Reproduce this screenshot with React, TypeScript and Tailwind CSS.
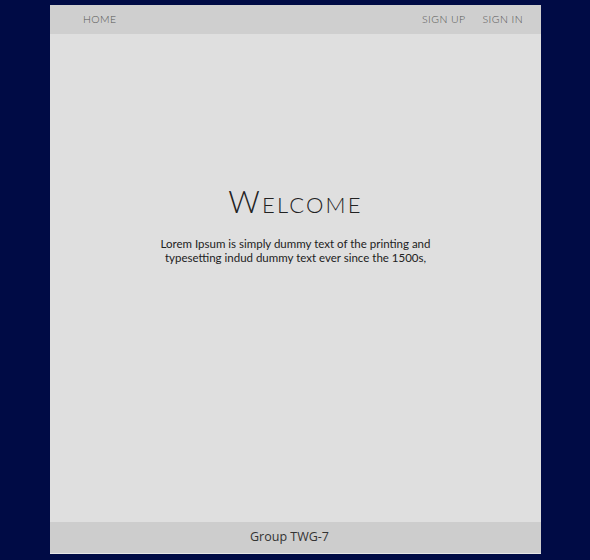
const navFont = { fontFamily: '"Lato", "Open Sans", sans-serif' };

export default function App() {
  return (
    <div className="min-h-screen w-full bg-[#000b45] pt-[5px]">
      <div className="ml-[50px] flex h-[549px] w-[491px] flex-col bg-[#dfdfdf]">
        <header
          className="flex h-[29px] items-center justify-between bg-[#cfcfcf] pl-[33px] pr-[18px] text-[10.5px] font-light uppercase tracking-[0.04em] text-[#555]"
          style={navFont}
        >
          <a href="#">Home</a>
          <nav className="flex gap-[17px]">
            <a href="#">Sign up</a>
            <a href="#">Sign in</a>
          </nav>
        </header>

        <main className="flex flex-1 flex-col items-center pt-[152px] text-center">
          <h1
            className="text-[31px] font-light leading-none tracking-[0.07em] text-[#222] [font-variant:small-caps]"
            style={{ fontFamily: '"Lato", "DejaVu Sans", sans-serif' }}
          >
            Welcome
          </h1>
          <p
            className="mt-[20px] w-[300px] text-[11.5px] leading-[14px] text-[#222]"
            style={{ fontFamily: '"Lato", "Open Sans", sans-serif' }}
          >
            Lorem Ipsum is simply dummy text of the printing and typesetting indud dummy text ever since the 1500s,
          </p>
        </main>

        <footer
          className="flex h-[32px] items-center justify-center border-b border-[#e6e6e6] bg-[#cdcdcd] pr-[12px] text-[12.5px] text-[#333]"
          style={{ fontFamily: '"Open Sans", "DejaVu Sans", sans-serif' }}
        >
          Group TWG-7
        </footer>
      </div>
    </div>
  );
}
